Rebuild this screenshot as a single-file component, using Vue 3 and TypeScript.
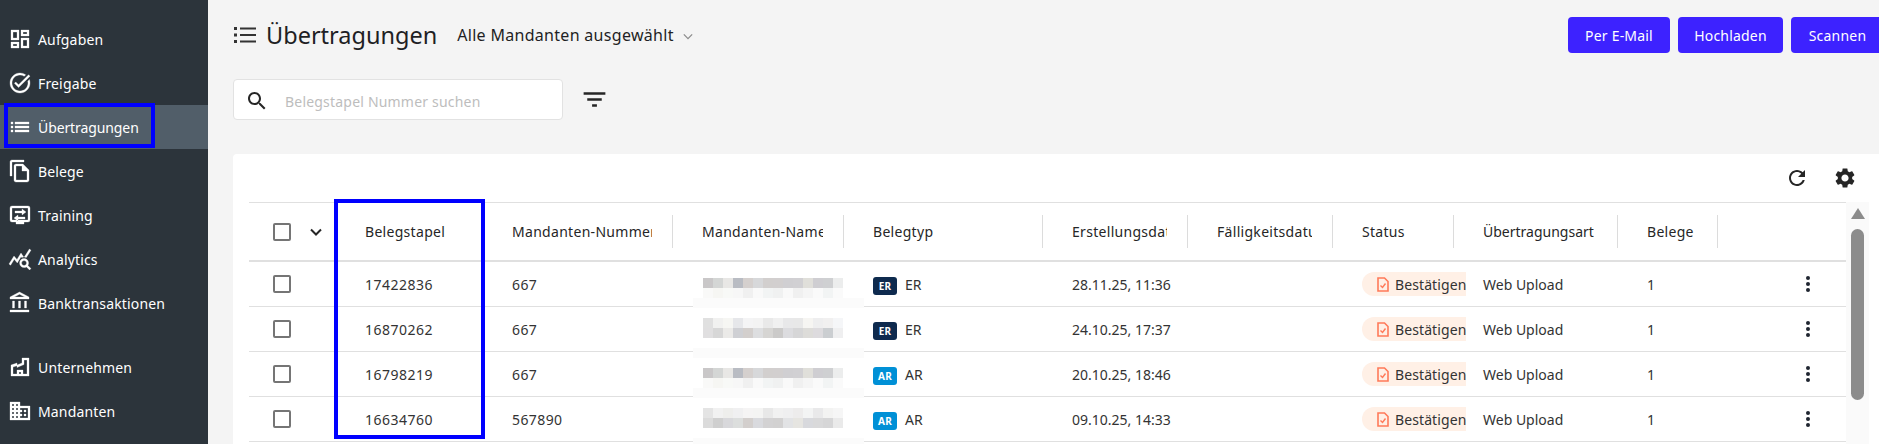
<script setup lang="ts">
interface NavItem { label: string; d?: string; custom?: string; active?: boolean }

const listD = 'M3 13h2v-2H3v2zm0 4h2v-2H3v2zm0-8h2V7H3v2zm4 4h14v-2H7v2zm0 4h14v-2H7v2zM7 7v2h14V7H7z'

const navTop: NavItem[] = [
  { label: 'Aufgaben', d: 'M19 5v2h-4V5h4M9 5v6H5V5h4m10 8v6h-4v-6h4M9 17v2H5v-2h4M21 3h-8v6h8V3zM11 3H3v10h8V3zm10 8h-8v10h8V11zm-10 4H3v6h8v-6z' },
  { label: 'Freigabe', d: 'M22 5.18 10.59 16.6l-4.24-4.24 1.41-1.41 2.83 2.83 10-10L22 5.18zm-2.21 5.04c.13.57.21 1.17.21 1.78 0 4.42-3.58 8-8 8s-8-3.58-8-8 3.58-8 8-8c1.58 0 3.04.46 4.28 1.25l1.44-1.44A9.9 9.9 0 0 0 12 2C6.48 2 2 6.48 2 12s4.48 10 10 10 10-4.48 10-10c0-1.19-.22-2.33-.6-3.39l-1.61 1.61z' },
  { label: 'Übertragungen', d: listD, active: true },
  { label: 'Belege', d: 'M16 1H4c-1.1 0-2 .9-2 2v14h2V3h12V1zm-1 4H8c-1.1 0-1.99.9-1.99 2L6 21c0 1.1.89 2 1.99 2H19c1.1 0 2-.9 2-2V11l-6-6zM8 21V7h6v5h5v9H8z' },
  { label: 'Training', d: 'M4 3h16a2 2 0 0 1 2 2v12a2 2 0 0 1-2 2h-4v2H8v-2H4a2 2 0 0 1-2-2V5a2 2 0 0 1 2-2zm0 2v12h16V5H4zm3 3h7V6l4 3-4 3v-2H7V8zm10 6h-7v-2l-4 3 4 3v-2h7v-2z' },
  { label: 'Analytics', d: 'M19.88 18.47c.44-.7.7-1.51.7-2.39 0-2.49-2.01-4.5-4.5-4.5s-4.5 2.01-4.5 4.5 2.01 4.5 4.49 4.5c.88 0 1.7-.26 2.39-.7L21.58 23 23 21.58l-3.12-3.11zm-3.8.11c-1.38 0-2.5-1.12-2.5-2.5s1.12-2.5 2.5-2.5 2.5 1.12 2.5 2.5-1.12 2.5-2.5 2.5zm-.36-8.5c-.74.02-1.45.18-2.1.45l-.55-.83-3.8 6.18-3.01-3.52-3.63 5.81L1 17l5-8 3 3.5L13 6l2.72 4.08zm2.59.5c-.64-.28-1.33-.45-2.05-.49L21.38 2 23 3.18l-4.69 7.4z' },
  { label: 'Banktransaktionen', d: 'M6.5 10h-2v7h2v-7zm6 0h-2v7h2v-7zm8.5 9H2v2h19v-2zm-2.5-9h-2v7h2v-7zm-7-6.74L16.71 6H6.29l5.21-2.74m0-2.26L2 6v2h19V6l-9.5-5z' }
]

const navBottom: NavItem[] = [
  { label: 'Unternehmen', d: 'M3 21V10l6-2v2l5-2V3h7v18H3zm2-2h4v-4h6v4h4V5h-3v4.5l-7 3V10.7l-4 1.4V19zm6 0h2v-2h-2v2z' },
  { label: 'Mandanten', d: 'M12 7V3H2v18h20V7H12zM6 19H4v-2h2v2zm0-4H4v-2h2v2zm0-4H4V9h2v2zm0-4H4V5h2v2zm4 12H8v-2h2v2zm0-4H8v-2h2v2zm0-4H8V9h2v2zm0-4H8V5h2v2zm10 12h-8v-2h2v-2h-2v-2h2v-2h-2V9h8v10zm-2-8h-2v2h2v-2zm0 4h-2v2h2v-2z' }
]

const headers = ['Belegstapel', 'Mandanten-Nummer', 'Mandanten-Name', 'Belegtyp', 'Erstellungsdatum', 'Fälligkeitsdatum', 'Status', 'Übertragungsart', 'Belege']

const mosaicA = [
  '#c9c7c8', '#d4d6d5', '#e8e7e5', '#b9bcc3', '#d5d0ce', '#d7d8da', '#d2cfce', '#d2cfcf', '#d0cfd2', '#d1d0d3', '#e0dfda', '#cfced2', '#cfd0d2', '#eceded',
  '#f9f9f8', '#f6f6f3', '#f8f9f7', '#f7f7f7', '#f0f0f0', '#f9f9f9', '#f2f4f4', '#f0f1f1', '#f9f9f9', '#f0f0f0', '#f5f5f5', '#fafafa', '#f2f4f4', '#fafafa'
]
const mosaicB = [
  '#e0e0e0', '#f1f1f0', '#f6f6f3', '#e6e7ea', '#f4f4f5', '#f3f3f3', '#e9e9e9', '#f0f0f0', '#e8e8e9', '#e8e8e8', '#f6f5f2', '#eeeeef', '#f1f0f0', '#f5f6f8',
  '#e0dfe0', '#d7d7d7', '#ebeae8', '#cfd0d4', '#d3cfcd', '#dddee0', '#d6d5d3', '#cbcac9', '#dcdcdf', '#d6d6d7', '#dddcd9', '#dddbde', '#cbced1', '#efeff0'
]
const mosaicC = [
  '#e4e4e4', '#f1f1f1', '#eeeeec', '#f0f0f1', '#f5f4f4', '#f4f4f3', '#e8e8e8', '#f1f1f1', '#efeff0', '#edecec', '#f3f4f4', '#e9e9ea', '#f3f3f2', '#f6f6f6',
  '#dbdbdb', '#cfcfcf', '#d8d8db', '#dcdedd', '#d3cfcd', '#d9dade', '#d3d2d3', '#d2d1d1', '#e2e3e5', '#e6e5e1', '#d8d9dd', '#d9d9da', '#d6d6d7', '#eaeaea'
]

const rows = [
  { id: '17422836', nr: '667', type: 'ER', date: '28.11.25, 11:36', mosaic: mosaicA, tall: false },
  { id: '16870262', nr: '667', type: 'ER', date: '24.10.25, 17:37', mosaic: mosaicB, tall: true },
  { id: '16798219', nr: '667', type: 'AR', date: '20.10.25, 18:46', mosaic: mosaicA, tall: false },
  { id: '16634760', nr: '567890', type: 'AR', date: '09.10.25, 14:33', mosaic: mosaicC, tall: true }
]
</script>

<template>
  <div class="page">
    <aside class="sidebar">
      <nav class="nav">
        <a v-for="item in navTop" :key="item.label" class="nav-item" :class="{ active: item.active }">
          <svg class="nav-icon" viewBox="0 0 24 24"><path :d="item.d" /></svg>
          <span>{{ item.label }}</span>
        </a>
      </nav>
      <nav class="nav nav-second">
        <a v-for="item in navBottom" :key="item.label" class="nav-item">
          <svg class="nav-icon" viewBox="0 0 24 24"><path :d="item.d" /></svg>
          <span>{{ item.label }}</span>
        </a>
      </nav>
    </aside>

    <main class="main">
      <header class="topbar">
        <div class="title-group">
          <svg class="title-icon" viewBox="0 0 22 16"><path d="M0 0h3v3H0zM0 6.5h3v3H0zM0 13h3v3H0zM6 .5h16v2H6zM6 7h16v2H6zM6 13.5h16v2H6z" /></svg>
          <h1 class="title">Übertragungen</h1>
          <button class="client-select">
            <span>Alle Mandanten ausgewählt</span>
            <svg class="chev" viewBox="0 0 12 8"><path d="M1 1.5 6 6.5 11 1.5" /></svg>
          </button>
        </div>
        <div class="actions">
          <button class="btn btn-mail">Per E-Mail</button>
          <button class="btn btn-upload">Hochladen</button>
          <button class="btn btn-scan">Scannen</button>
        </div>
      </header>

      <div class="search-row">
        <div class="search">
          <svg class="search-icon" viewBox="0 0 24 24"><path d="M15.5 14h-.79l-.28-.27C15.41 12.59 16 11.11 16 9.5 16 5.91 13.09 3 9.5 3S3 5.91 3 9.5 5.91 16 9.5 16c1.61 0 3.09-.59 4.23-1.57l.27.28v.79l5 4.99L20.49 19l-4.99-5zm-6 0C7.01 14 5 11.99 5 9.5S7.01 5 9.5 5 14 7.01 14 9.5 11.99 14 9.5 14z" /></svg>
          <span class="placeholder">Belegstapel Nummer suchen</span>
        </div>
        <svg class="filter-icon" viewBox="0 0 24 24"><path d="M10 18h4v-2h-4v2zM3 6v2h18V6H3zm3 7h12v-2H6v2z" /></svg>
      </div>

      <section class="card">
        <div class="toolbar">
          <svg class="tool-icon" viewBox="0 0 24 24"><path d="M17.65 6.35C16.2 4.9 14.21 4 12 4c-4.42 0-7.99 3.58-7.99 8s3.57 8 7.99 8c3.73 0 6.84-2.55 7.73-6h-2.08c-.82 2.33-3.04 4-5.65 4-3.31 0-6-2.69-6-6s2.69-6 6-6c1.66 0 3.14.69 4.22 1.78L13 11h7V4l-2.35 2.35z" /></svg>
          <svg class="tool-icon" viewBox="0 0 24 24"><path d="M19.14 12.94c.04-.3.06-.61.06-.94 0-.32-.02-.64-.07-.94l2.03-1.58c.18-.14.23-.41.12-.61l-1.92-3.32c-.12-.22-.37-.29-.59-.22l-2.39.96c-.5-.38-1.03-.7-1.62-.94l-.36-2.54c-.04-.24-.24-.41-.48-.41h-3.84c-.24 0-.43.17-.47.41l-.36 2.54c-.59.24-1.13.57-1.62.94l-2.39-.96c-.22-.08-.47 0-.59.22L2.74 8.87c-.12.21-.08.47.12.61l2.03 1.58c-.05.3-.09.63-.09.94s.02.64.07.94l-2.03 1.58c-.18.14-.23.41-.12.61l1.92 3.32c.12.22.37.29.59.22l2.39-.96c.5.38 1.03.7 1.62.94l.36 2.54c.05.24.24.41.48.41h3.84c.24 0 .44-.17.47-.41l.36-2.54c.59-.24 1.13-.56 1.62-.94l2.39.96c.22.08.47 0 .59-.22l1.92-3.32c.12-.22.07-.47-.12-.61l-2.01-1.58zM12 15.6c-1.98 0-3.6-1.62-3.6-3.6s1.62-3.6 3.6-3.6 3.6 1.62 3.6 3.6-1.62 3.6-3.6 3.6z" /></svg>
        </div>
        <div class="table-wrap">
          <div class="table">
            <div class="row head">
              <div class="select-cell">
                <span class="checkbox"></span>
                <svg class="head-chev" viewBox="0 0 12 8"><path d="M1 1.5 6 6.5 11 1.5" /></svg>
              </div>
              <div v-for="(h, i) in headers" :key="h" class="hcell" :class="{ nosep: i === 0, tight: i === 7 }">
                <span class="hlabel">{{ h }}</span>
              </div>
              <div></div>
            </div>
            <div v-for="r in rows" :key="r.id" class="row body">
              <div class="select-cell"><span class="checkbox"></span></div>
              <div class="cell num id-cell">{{ r.id }}</div>
              <div class="cell num">{{ r.nr }}</div>
              <div class="cell name-cell">
                <div class="blur" :class="{ tall: r.tall }">
                  <div class="mosaic">
                    <i v-for="(c, i) in r.mosaic" :key="i" :style="{ background: c }"></i>
                  </div>
                  <div class="band"></div>
                </div>
              </div>
              <div class="cell">
                <span class="badge" :class="r.type === 'ER' ? 'badge-er' : 'badge-ar'">{{ r.type }}</span>
                <span class="type-label">{{ r.type }}</span>
              </div>
              <div class="cell">{{ r.date }}</div>
              <div class="cell"></div>
              <div class="cell status-cell">
                <span class="pill">
                  <svg class="pill-icon" viewBox="0 0 12 15">
                    <path class="pill-page" d="M1 1h6.5L11 4.5V14H1z" />
                    <path class="pill-check" d="M3.5 8.5 5.5 10.5 8.5 6.5" />
                  </svg>
                  <span>Bestätigen</span>
                </span>
              </div>
              <div class="cell">Web Upload</div>
              <div class="cell">1</div>
              <div class="cell kebab-cell">
                <span class="kebab"><i></i><i></i><i></i></span>
              </div>
            </div>
          </div>
          <div class="scrollbar">
            <span class="scroll-arrow"></span>
            <span class="scroll-thumb"></span>
          </div>
        </div>
      </section>
    </main>

    <div class="mark mark-nav"></div>
    <div class="mark mark-col"></div>
  </div>
</template>

<style>
html, body { margin: 0; background: #f4f4f4; }
</style>

<style scoped>
.page {
  position: relative;
  display: flex;
  width: 1879px;
  height: 444px;
  overflow: hidden;
  background: #f4f4f4;
  font-family: "Noto Sans", sans-serif;
  color: #262626;
}

.sidebar {
  flex: 0 0 208px;
  padding-top: 17px;
  background: #2c343b;
  box-sizing: border-box;
}
.nav { display: flex; flex-direction: column; }
.nav-second { margin-top: 20px; }
.nav-item {
  display: flex;
  align-items: center;
  height: 44px;
  padding-left: 8px;
  color: #fff;
  font-size: 14px;
  letter-spacing: 0.15px;
}
.nav-item.active { background: #515e69; letter-spacing: -0.1px; }
.nav-icon { width: 24px; height: 24px; margin-right: 6px; fill: #fff; stroke: #fff; stroke-width: 0.3; flex: none; }

.main { flex: 1; min-width: 0; padding-left: 25px; padding-top: 17px; }

.topbar { display: flex; justify-content: space-between; align-items: center; height: 36px; margin-right: -5px; }
.title-group { display: flex; align-items: center; }
.title-icon { width: 22px; height: 16px; margin-left: 1px; fill: #333; }
.title { margin: 0 0 0 10px; font-size: 23.5px; font-weight: 400; color: #1f1f24; }
.client-select {
  display: flex;
  align-items: center;
  margin-left: 20px;
  padding: 0;
  border: 0;
  background: none;
  font: inherit;
  font-size: 16px;
  letter-spacing: 0.3px;
  color: #1f1f24;
}
.chev { width: 10px; height: 7px; margin-left: 9px; margin-top: 3px; fill: none; stroke: #8c8c8c; stroke-width: 1.5; }
.actions { display: flex; gap: 8px; }
.btn {
  height: 36px;
  padding: 0;
  border: 0;
  border-radius: 4px;
  background: #3d22ff;
  color: #fff;
  font: inherit;
  font-size: 14px;
  letter-spacing: 0.2px;
}
.btn-mail { width: 102px; }
.btn-upload { width: 105px; }
.btn-scan { width: 93px; }

.search-row { display: flex; align-items: center; margin-top: 26px; }
.search {
  display: flex;
  align-items: center;
  box-sizing: border-box;
  width: 330px;
  height: 41px;
  padding-left: 11px;
  background: #fff;
  border: 1px solid #e2e2e2;
  border-radius: 4px;
}
.search-icon { width: 24px; height: 24px; margin-top: 2px; fill: #262626; flex: none; }
.placeholder { margin-left: 16px; margin-top: 4px; font-size: 14px; letter-spacing: 0.2px; color: #bdbdbd; }
.filter-icon { width: 29px; height: 29px; margin-left: 17px; fill: #262626; }

.card { margin-top: 34px; height: 290px; background: #fff; border-top-left-radius: 4px; }
.toolbar { display: flex; justify-content: flex-end; align-items: center; gap: 24px; height: 48px; padding-right: 22px; }
.tool-icon { width: 24px; height: 24px; fill: #262626; }
.table-wrap { display: flex; padding-left: 16px; }
.table { width: 1597px; flex: none; }
.row {
  display: grid;
  grid-template-columns: 88px 146px 190px 171px 199px 145px 145px 121px 164px 100px 128px;
  box-sizing: border-box;
  align-items: center;
  border-bottom: 1px solid #e0e0e0;
  font-size: 14px;
}
.head { height: 60px; border-top: 1px solid #e0e0e0; border-bottom-width: 2px; }
.body { height: 45px; }

.select-cell { display: flex; align-items: center; padding-left: 24px; }
.checkbox { width: 18px; height: 18px; box-sizing: border-box; border: 2px solid #757575; border-radius: 2px; flex: none; }
.head-chev { width: 12px; height: 8px; margin-left: 19px; fill: none; stroke: #262626; stroke-width: 2; }

.hcell {
  display: flex;
  align-items: center;
  height: 33px;
  min-width: 0;
  box-sizing: border-box;
  padding: 0 20px 0 29px;
  border-right: 1px solid #dcdcdc;
  letter-spacing: 0.3px;
}
.hcell.nosep { border-right: 0; padding-left: 28px; }
.hcell.tight { letter-spacing: 0; }
.hlabel { display: block; overflow: hidden; white-space: nowrap; }

.cell { display: flex; align-items: center; padding-left: 29px; white-space: nowrap; min-width: 0; color: #333; }
.num { letter-spacing: 0.4px; }
.id-cell { padding-left: 28px; letter-spacing: 0.5px; }
.name-cell { position: relative; align-self: stretch; }
.blur {
  position: absolute;
  left: 20px;
  top: 16px;
  width: 171px;
  z-index: 1;
  background: #fff;
}
.blur.tall { top: 11px; }
.mosaic { display: grid; grid-template-columns: repeat(14, 10px); grid-auto-rows: 10px; padding-left: 10px; }
.band { height: 10px; background: #fbfbfb; }
.blur.tall .band { margin-top: 10px; }

.badge {
  display: flex;
  align-items: center;
  justify-content: center;
  width: 24px;
  height: 18px;
  margin-top: 4px;
  border-radius: 3px;
  color: #fff;
  font-size: 10px;
  font-weight: 700;
  letter-spacing: 0.2px;
}
.badge-er { background: #0e2a4e; }
.badge-ar { background: #0090d6; }
.type-label { margin-left: 8px; }

.pill {
  display: flex;
  align-items: center;
  flex: none;
  width: 104px;
  height: 24px;
  padding-left: 15px;
  box-sizing: border-box;
  overflow: hidden;
  background: #fff0e6;
  border-radius: 12px 0 0 12px;
  color: #333;
  letter-spacing: 0.1px;
}
.pill-icon { width: 12px; height: 15px; margin-right: 6px; flex: none; }
.pill-page { fill: none; stroke: #ff7a59; stroke-width: 1.6; }
.pill-check { fill: none; stroke: #ff7a59; stroke-width: 1.4; }

.kebab-cell { justify-content: flex-start; padding-left: 88px; }
.kebab { display: flex; flex-direction: column; gap: 2px; }
.kebab i { display: block; width: 4px; height: 4px; border-radius: 50%; background: #1f2530; }

.scrollbar { width: 23px; height: 250px; flex: none; background: #fafafa; display: flex; flex-direction: column; align-items: center; padding-top: 6px; box-sizing: border-box; }
.scroll-arrow { width: 0; height: 0; border-left: 7.5px solid transparent; border-right: 7.5px solid transparent; border-bottom: 11px solid #8c8c8c; }
.scroll-thumb { width: 13px; height: 171px; margin-top: 10px; border-radius: 6.5px; background: #8c8c8c; }

.mark { position: absolute; box-sizing: border-box; border: 4px solid #0000ff; pointer-events: none; z-index: 2; }
.mark-nav { left: 4px; top: 103px; width: 151px; height: 45px; }
.mark-col { left: 334px; top: 199px; width: 151px; height: 240px; }
</style>
